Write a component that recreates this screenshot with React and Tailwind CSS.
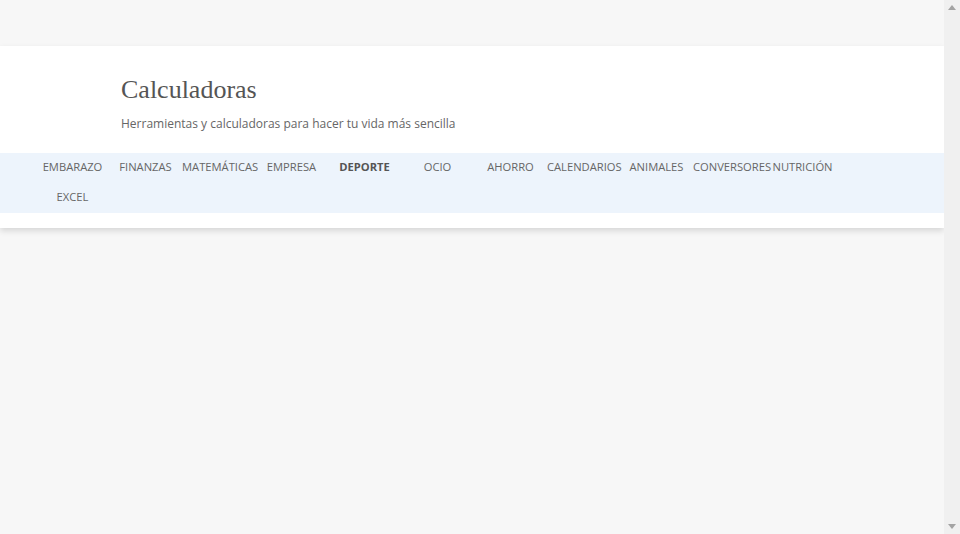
const categories = [
  "Embarazo",
  "Finanzas",
  "Matemáticas",
  "Empresa",
  "Deporte",
  "Ocio",
  "Ahorro",
  "Calendarios",
  "Animales",
  "Conversores",
  "Nutrición",
  "Excel",
]

function Scrollbar() {
  return (
    <div className="flex w-4 shrink-0 flex-col items-center justify-between bg-[#f0f0f0] py-[5px]">
      <svg width="8" height="5" viewBox="0 0 8 5">
        <path d="M4 0 L8 5 L0 5 Z" fill="#a3a3a3" />
      </svg>
      <svg width="8" height="5" viewBox="0 0 8 5">
        <path d="M0 0 L8 0 L4 5 Z" fill="#a3a3a3" />
      </svg>
    </div>
  )
}

export default function App() {
  const active = "Deporte"

  return (
    <div className="flex h-screen bg-[#f7f7f7] font-['Open_Sans',sans-serif]">
      <div className="min-w-0 flex-1">
        <header className="mt-[46px] bg-white pb-[15px] shadow-[0_3px_6px_rgba(0,0,0,0.13)]">
          <div className="pl-[121px] pt-[28px] pb-[19px]">
            <h1 className="font-['Liberation_Serif',serif] text-[26px] leading-[32px] text-[#555]">
              Calculadoras
            </h1>
            <p className="mt-2 text-[12px] leading-[20px] text-[#666]">
              Herramientas y calculadoras para hacer tu vida más sencilla
            </p>
          </div>

          <nav className="bg-[#edf4fc] px-[36px]">
            <ul className="flex flex-wrap">
              {categories.map((c) => (
                <li
                  key={c}
                  className={
                    "h-[30px] w-[73px] whitespace-nowrap text-center text-[11.2px] leading-[28px] uppercase " +
                    (c === active ? "font-bold text-[#555]" : "text-[#666]")
                  }
                >
                  {c}
                </li>
              ))}
            </ul>
          </nav>
        </header>
      </div>
      <Scrollbar />
    </div>
  )
}
